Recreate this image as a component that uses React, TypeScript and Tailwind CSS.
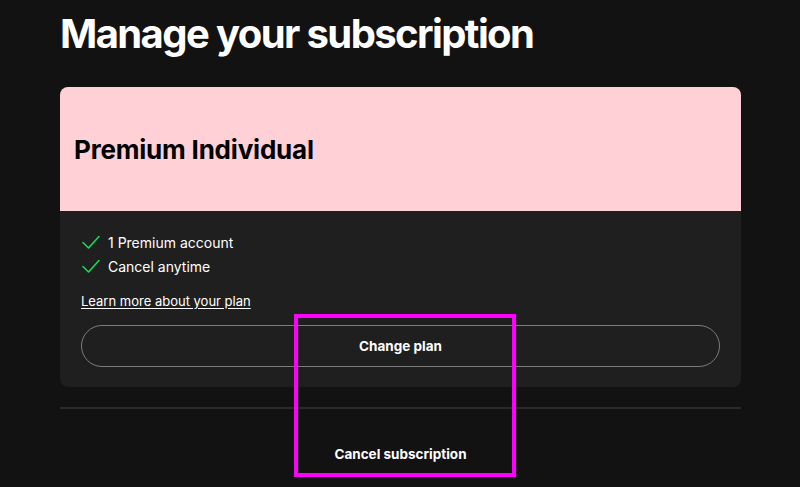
import React from "react";

function Check() {
  return (
    <svg width="20" height="20" viewBox="0 0 20 20" fill="none" className="shrink-0">
      <path d="M2 10.5 L7.5 16 L18 4.5" stroke="#1ed760" strokeWidth="1.6" strokeLinecap="round" strokeLinejoin="round" />
    </svg>
  );
}

export default function App() {
  return (
    <div className="relative w-[800px] h-[487px] overflow-hidden bg-[#121212] text-white" style={{ fontFamily: "Inter, 'Liberation Sans', sans-serif" }}>
      <div className="px-[60px] pt-[6px] w-[801px]">
        <h1 className="text-[40px] leading-[56px] font-bold tracking-[-1.6px] text-white">Manage your subscription</h1>
        <div className="mt-[25px] w-[681px] rounded-lg overflow-hidden bg-[#1f1f1f]">
          <div className="h-[124px] bg-[#ffd1d7] flex items-center px-[14px]">
            <h2 className="text-[26px] font-bold tracking-[-0.2px] text-black">Premium Individual</h2>
          </div>
          <div className="px-[21px] pt-[21px] pb-[20px]">
            <ul className="flex flex-col gap-[4px] text-[14px]">
              <li className="flex items-center gap-[7px] h-[20px]"><Check /><span>1 Premium account</span></li>
              <li className="flex items-center gap-[7px] h-[20px]"><Check /><span>Cancel anytime</span></li>
            </ul>
            <a className="block mt-[16px] text-[13px] underline underline-offset-2 leading-[18px]">Learn more about your plan</a>
            <button className="mt-[15px] w-full h-[42px] rounded-full border border-[#7c7c7c] text-[13.5px] font-bold text-white">Change plan</button>
          </div>
        </div>
        <div className="mt-[20px] w-[681px] h-[2px] bg-[#2a2a2a]" />
        <div className="mt-[35px] w-[681px] text-center text-[13.5px] font-bold">Cancel subscription</div>
      </div>
      <div className="absolute left-[294px] top-[314px] w-[222px] h-[163px] border-4 border-[#ff00ff] pointer-events-none" />
    </div>
  );
}
